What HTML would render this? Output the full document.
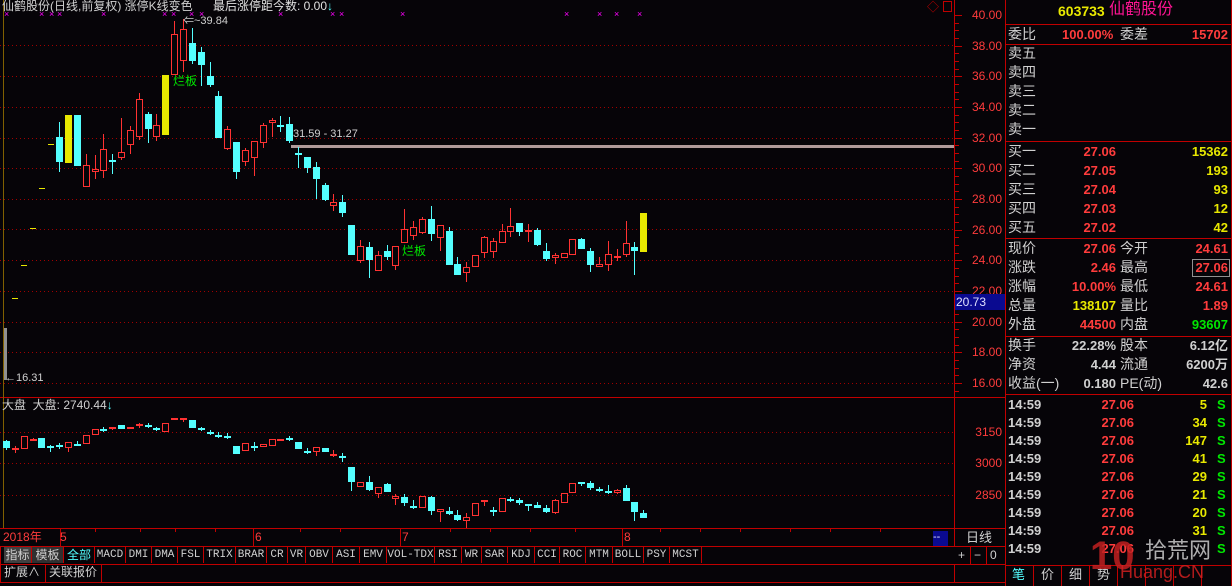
<!DOCTYPE html>
<html><head><meta charset="utf-8">
<style>
*{margin:0;padding:0;box-sizing:border-box}
body{width:1232px;height:586px;background:#060408;overflow:hidden;position:relative;font-family:"Liberation Sans","Noto Sans CJK SC",sans-serif;color:#c8c8c8}
.a{position:absolute;white-space:nowrap;line-height:1}
.r{color:#ff3c3c}.y{color:#e8e800}.g{color:#00e800}.c{color:#54ffff}.w{color:#d0d0d0}
.hl{position:absolute;height:1px;background:#c00000}
.vl{position:absolute;width:1px;background:#c00000}
.rt{text-align:right}
.tab{position:absolute;top:547px;height:16px;border-right:1px solid #c00000;font:11px "Liberation Mono","Noto Sans CJK SC",monospace;color:#d0d0d0;text-align:center;line-height:16px}
.p{font-size:14px}
.n{font-size:13px;font-weight:bold}
</style></head><body>
<svg id="s" width="1232" height="586" style="position:absolute;left:0;top:0" xmlns="http://www.w3.org/2000/svg"></svg>

<div class="a" style="left:2px;top:0;font-size:12px;color:#d0d0d0">仙鹤股份(日线,前复权) 涨停K线变色</div>
<div class="a" style="left:213px;top:0;font-size:12px;color:#e0e0e0">最后涨停距今数: 0.00<span class="c">↓</span></div>
<div class="a" style="left:183px;top:16px;font-size:11px;color:#d0d0d0">⇐~39.84</div>
<div class="a g" style="left:173px;top:75px;font-size:12px">烂板</div>
<div class="a g" style="left:402px;top:245px;font-size:12px">烂板</div>
<div class="a" style="left:293px;top:129px;font-size:11px;color:#d0d0d0">31.59 - 31.27</div>
<div class="a" style="left:5px;top:373px;font-size:11px;color:#d0d0d0">←16.31</div>
<div class="a" style="left:927px;top:1px;font-size:12px;color:#c00000">◇</div>
<div class="a" style="left:943px;top:1px;width:9px;height:11px;border:1px solid #c00000"></div>

<div class="a" style="left:2px;top:399px;font-size:12px;color:#d0d0d0">大盘&nbsp;&nbsp;大盘: 2740.44<span class="c">↓</span></div>

<!-- price axis labels -->
<div id="ax"></div>
<div class="a" style="left:955px;top:294px;width:50px;height:16px;background:#0a0a90;color:#e0e0ff;font-size:12px;line-height:16px;padding-left:1px">20.73</div>
<div class="a r rt" style="left:960px;top:426px;width:42px;font-size:12px">3150</div>
<div class="a r rt" style="left:960px;top:457px;width:42px;font-size:12px">3000</div>
<div class="a r rt" style="left:960px;top:489px;width:42px;font-size:12px">2850</div>

<!-- time axis -->
<div class="a r" style="left:3px;top:531px;font-size:12px">2018年</div>
<div class="a r" style="left:60px;top:531px;font-size:12px">5</div>
<div class="a r" style="left:255px;top:531px;font-size:12px">6</div>
<div class="a r" style="left:402px;top:531px;font-size:12px">7</div>
<div class="a r" style="left:624px;top:531px;font-size:12px">8</div>
<div class="a" style="left:933px;top:531px;width:15px;height:15px;background:#0a0a90;color:#e0e0ff;font-size:11px;line-height:13px">--</div>
<div class="a" style="left:966px;top:531px;font-size:13px;color:#d0d0d0">日线</div>

<!-- tabs -->
<div id="tabs"></div>
<div class="a" style="left:4px;top:566px;font-size:12px;color:#d0d0d0">扩展∧</div>
<div class="a" style="left:49px;top:566px;font-size:12px;color:#d0d0d0">关联报价</div>
<div class="a" style="left:958px;top:549px;font-size:12px;color:#d0d0d0">+</div>
<div class="a" style="left:974px;top:549px;font-size:12px;color:#d0d0d0">−</div>
<div class="a" style="left:990px;top:549px;font-size:12px;color:#d0d0d0">0</div>

<!-- right panel -->
<div class="a y n" style="left:1058px;top:4px;font-size:14px">603733</div>
<div class="a" style="left:1109px;top:2px;font-size:16px;color:#ff1493">仙鹤股份</div>
<div class="a w p" style="left:1008px;top:27px">委比</div>
<div class="a r n" style="left:1062px;top:28px">100.00%</div>
<div class="a w p" style="left:1120px;top:27px">委差</div>
<div class="a r n rt" style="left:1160px;top:28px;width:68px">15702</div>
<div id="rp"></div>

<!-- bottom tabs -->
<div class="a c" style="left:1012px;top:568px;font-size:13px">笔</div>
<div class="a w" style="left:1041px;top:568px;font-size:13px">价</div>
<div class="a w" style="left:1069px;top:568px;font-size:13px">细</div>
<div class="a w" style="left:1097px;top:568px;font-size:13px">势</div>
<div class="a" style="left:1090px;top:536px;font-size:40px;font-weight:bold;color:#c02020;opacity:.85">10</div>
<div class="a" style="left:1145px;top:540px;font-size:22px;color:#d8d8d8;opacity:.8">拾荒网</div>
<div class="a" style="left:1120px;top:563px;font-size:18px;color:#d02020;opacity:.85">Huang.CN</div>

<script>
var S=document.getElementById('s'),h='';
function L(x1,y1,x2,y2,c,d){h+='<line x1="'+x1+'" y1="'+y1+'" x2="'+x2+'" y2="'+y2+'" stroke="'+c+'" stroke-width="1"'+(d?' stroke-dasharray="1,3"':'')+'/>';}
function R(x,y,w,hh,f,s){h+='<rect x="'+x+'" y="'+y+'" width="'+w+'" height="'+hh+'" fill="'+f+'"'+(s?' stroke="'+s+'"':'')+'/>';}
// grid dotted
[45,76,107,138,168,199,229,260,291,322,352,383].forEach(function(y){L(0,y+.5,954,y+.5,'#a00000',1)});
[432,463,495].forEach(function(y){L(0,y+.5,954,y+.5,'#a00000',1)});
// frame lines
L(954.5,0,954.5,546,'#c00000');L(1005.5,0,1005.5,586,'#c00000');L(1231.5,0,1231.5,586,'#c00000');
L(0,397.5,1005,397.5,'#c00000');L(0,528.5,1005,528.5,'#c00000');L(0,546.5,1005,546.5,'#c00000');L(0,564.5,1005,564.5,'#c00000');L(0,582.5,1005,582.5,'#c00000');
L(0.5,546,0.5,583,'#c00000');L(45.5,564,45.5,583,'#c00000');L(101.5,564,101.5,583,'#c00000');L(954.5,564,954.5,583,'#c00000');
L(970.5,546,970.5,564,'#c00000');L(986.5,546,986.5,564,'#c00000');
L(3.5,0,3.5,528,'#806000');
// axis ticks
for(var y=15;y<395;y+=7.67){L(955,Math.round(y)+.5,959,Math.round(y)+.5,'#c00000')}
for(var y=15;y<395;y+=30.67){L(955,Math.round(y)+.5,962,Math.round(y)+.5,'#c00000')}
// time axis ticks
[60,253,400,622].forEach(function(x){L(x+.5,529,x+.5,546,'#c00000')});
[95,140,175,215,300,340,450,490,530,575,660,700,740,790,830,880].forEach(function(x){L(x+.5,529,x+.5,532,'#c00000')});
// magenta markers
[7,42,52,60,104,165,174,192,202,281,333,342,403,567,600,617,640].forEach(function(x){h+='<text x="'+(x-3)+'" y="17" fill="#ff00ff" font-size="9" font-family="Liberation Sans">×</text>'});
// gray band
R(291,145,663,3,'#b09a9a');
R(4,328,3,52,'#909090');
// yellow dashes
[[12,298],[21,265],[30,228],[39,188],[48,144]].forEach(function(d){R(d[0],d[1],6,1,'#e8e800')});
var X=function(k){return Math.round(6+8.85*k)};
function cd(k,c,t,b,wt,wb){var x=X(k);if(wt==null){wt=t;wb=b}
 var col=c=='r'?'#ff3232':c=='c'?'#54ffff':'#e8e800';
 L(x+.5,wt,x+.5,wb,col);
 if(b-t<2){R(x-3,t,7,2,col);return}
 if(c=='r'){R(x-3+.5,t+.5,6,b-t-1,'#060408',col)}else{R(x-3,t,7,b-t,col)}
}
var M=[[6,'c',137,162,122,172],[7,'y',115,163],[8,'c',115,166],[9,'r',165,187,154,187],[10,'r',169,172,155,179],[11,'r',149,171,134,178],[12,'c',160,161,154,174],[13,'r',152,158,118,160],[14,'r',130,145,126,154],[15,'r',99,137,93,140],[16,'c',114,129,112,143],[17,'r',125,137,114,141],[18,'y',75,135],[19,'r',34,75,21,75],[20,'r',29,61,19,72],[21,'c',43,61,28,64],[22,'c',52,65,47,86],[23,'c',76,85,62,87],[24,'c',96,138,91,138],[25,'r',129,149,126,150],[26,'c',142,172,142,179],[27,'r',150,162,148,166],[28,'r',141,158,141,176],[29,'r',125,143,123,148],[30,'r',120,123,118,137],[31,'c',125,126,116,132],[32,'c',124,141,117,143],[33,'c',153,155,147,168],[34,'c',157,168,157,173],[35,'c',167,179,162,199],[36,'c',185,200,183,201],[37,'r',202,206,194,211],[38,'c',202,213,195,217],[39,'c',225,255],[40,'r',246,261,240,263],[41,'c',247,260,242,278],[42,'r',255,271,251,271],[43,'c',251,257,245,260],[44,'r',246,266,246,270],[45,'r',229,243,209,243],[46,'r',227,236,221,240],[47,'r',219,233,217,234],[48,'c',219,234,206,241],[49,'r',225,238,225,251],[50,'c',231,265,227,265],[51,'c',264,275,257,275],[52,'r',267,273,262,282],[53,'r',255,267],[54,'r',237,253,236,258],[55,'r',241,252,238,258],[56,'r',231,243,224,243],[57,'r',226,232,208,237],[58,'c',223,232,223,236],[59,'r',230,231,224,242],[60,'c',230,245,228,246],[61,'c',251,259,243,261],[62,'r',255,258,253,264],[63,'r',253,258],[64,'r',239,255],[65,'c',239,249,238,249],[66,'c',251,265,248,272],[67,'r',264,267,257,267],[68,'r',254,265,241,271],[69,'r',256,257,249,261],[70,'r',243,255,221,257],[71,'c',247,251,242,275],[72,'y',213,252]];
M.forEach(function(m){cd(m[0],m[1],m[2],m[3],m[4],m[5])});
var D=[['c',138,158,135,165],['r',160,165,152,175],['r',124,163],['r',131,135,128,137],['c',130,158,128,160],['c',152,154,150,172],['c',149,152,143,163],['r',142,160,142,170],['c',146,148,138,150],['r',121,146],['r',103,121],['c',102,104,97,112],['r',97,101,95,106],['c',91,101],['r',96,100],['r',86,91,84,100],['c',90,97,84,99],['c',99,106,96,108],['r',85,112],['r',70,76],['r',70,73,70,82],['c',76,98],['c',99,106,96,108],['c',110,115,104,120],['c',120,122,112,130],['c',123,127,115,133],['c',152,178],['r',145,167],['c',153,156,142,167],['r',148,155],['r',133,152],['r',132,136],['c',128,134,123,137],['c',141,161],['c',168,170,160,178],['r',157,172,155,182],['c',159,172],['r',178,182,165,185],['c',182,190,174,200],['c',216,262,216,287],['r',260,277],['c',262,284,243,287],['r',277,298,277,308],['c',268,292,265,292],['r',303,313,298,330],['c',306,323,298,332],['c',333,339,316,342],['r',303,340],['c',306,347,303,360],['r',343,350,343,380],['c',348,356,336,359],['c',360,374,346,378],['r',367,377,355,400],['r',325,364],['r',316,322,316,332],['c',345,347,335,362],['r',310,352],['c',311,313,307,320],['c',315,324,309,329],['c',327,331,327,347],['c',330,338,322,340],['c',340,350,330,353],['r',316,353,313,358],['r',295,325],['r',265,295],['c',262,266,260,272],['c',265,278,258,285],['c',282,284,276,290],['c',289,291,270,298],['r',286,293,283,296],['c',280,317,270,317],['c',321,350,321,377],['c',353,368,346,368]];
function zy(v){return Math.round(395+v/3)}
D.forEach(function(d,i){var wt=d[3]==null?d[1]:d[3],wb=d[4]==null?d[2]:d[4];cd(i,d[0],zy(d[1]),zy(d[2]),zy(wt),zy(wb))});
// right panel lines
[24,44,141,238,336,394,565].forEach(function(y){L(1005,y+.5,1232,y+.5,'#c00000')});
[1033,1061,1089,1117,1145,1173,1201].forEach(function(x){L(x+.5,565,x+.5,586,'#c00000')});
S.innerHTML=h;
// axis labels
var ax='';for(var i=0;i<13;i++){var p=40-2*i,y=Math.round(15+30.67*i)-6;ax+='<div class="a r rt" style="left:958px;top:'+y+'px;width:44px;font-size:12px">'+p.toFixed(2)+'</div>'}
document.getElementById('ax').innerHTML=ax;
// tabs
var T=[['指标',4,31,'#d0d0d0','#404040'],['模板',32,63,'#d0d0d0','#303030'],['全部',64,94,'#54ffff'],['MACD',95,125],['DMI',126,151],['DMA',152,177],['FSL',178,203],['TRIX',204,235],['BRAR',236,266],['CR',267,287],['VR',288,305],['OBV',306,332],['ASI',333,359],['EMV',360,386],['VOL-TDX',387,434],['RSI',435,461],['WR',462,481],['SAR',482,507],['KDJ',508,534],['CCI',535,559],['ROC',560,585],['MTM',586,612],['BOLL',613,643],['PSY',644,669],['MCST',670,701]];
var t='';T.forEach(function(a){t+='<div class="tab" style="left:'+a[1]+'px;width:'+(a[2]-a[1]+1)+'px;'+(a[3]?'color:'+a[3]+';':'')+(a[4]?'background:'+a[4]+';':'')+'font-family:'+(/[A-Z]/.test(a[0])?'Liberation Mono':'Liberation Sans,Noto Sans CJK SC')+',monospace;font-size:'+(/[A-Z]/.test(a[0])?'11px':'12px')+'">'+a[0]+'</div>'});
document.getElementById('tabs').innerHTML=t;
// right panel
var r='';
['卖五','卖四','卖三','卖二','卖一'].forEach(function(s,i){r+='<div class="a w p" style="left:1008px;top:'+(46+19*i)+'px">'+s+'</div>'});
[['买一','27.06','15362'],['买二','27.05','193'],['买三','27.04','93'],['买四','27.03','12'],['买五','27.02','42']].forEach(function(a,i){var y=144+19*i;r+='<div class="a w p" style="left:1008px;top:'+y+'px">'+a[0]+'</div><div class="a r n rt" style="left:1060px;top:'+(y+1)+'px;width:56px">'+a[1]+'</div><div class="a y n rt" style="left:1160px;top:'+(y+1)+'px;width:68px">'+a[2]+'</div>'});
[['现价','27.06','r','今开','24.61','r'],['涨跌','2.46','r','最高','27.06','r'],['涨幅','10.00%','r','最低','24.61','r'],['总量','138107','y','量比','1.89','r'],['外盘','44500','r','内盘','93607','g']].forEach(function(a,i){var y=241+19*i;r+='<div class="a w p" style="left:1008px;top:'+y+'px">'+a[0]+'</div><div class="a '+a[2]+' n rt" style="left:1050px;top:'+(y+1)+'px;width:66px">'+a[1]+'</div><div class="a w p" style="left:1120px;top:'+y+'px">'+a[3]+'</div><div class="a '+a[5]+' n rt" style="left:1160px;top:'+(y+1)+'px;width:68px">'+a[4]+'</div>'});
r+='<div class="a" style="left:1192px;top:259px;width:38px;height:18px;border:1px solid #909090"></div>';
[['换手','22.28%','股本','6.12亿'],['净资','4.44','流通','6200万'],['收益(一)','0.180','PE(动)','42.6']].forEach(function(a,i){var y=338+19*i;r+='<div class="a w p" style="left:1008px;top:'+y+'px">'+a[0]+'</div><div class="a w n rt" style="left:1050px;top:'+(y+1)+'px;width:66px">'+a[1]+'</div><div class="a w p" style="left:1120px;top:'+y+'px">'+a[2]+'</div><div class="a w n rt" style="left:1160px;top:'+(y+1)+'px;width:68px">'+a[3]+'</div>'});
['5','34','147','41','29','21','20','31',''].forEach(function(q,i){var y=398+18*i;r+='<div class="a w n" style="left:1008px;top:'+y+'px">14:59</div><div class="a r n rt" style="left:1090px;top:'+y+'px;width:44px">27.06</div><div class="a y n rt" style="left:1170px;top:'+y+'px;width:37px">'+q+'</div><div class="a g n" style="left:1217px;top:'+y+'px">S</div>'});
document.getElementById('rp').innerHTML=r;
</script>
</body></html>
